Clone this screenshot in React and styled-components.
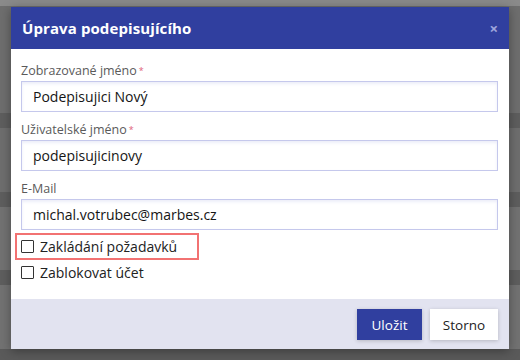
import React from 'react';
import styled, { createGlobalStyle } from 'styled-components';

const GlobalStyle = createGlobalStyle`
  html, body {
    margin: 0;
    padding: 0;
  }
  body {
    width: 520px;
    height: 360px;
    overflow: hidden;
    font-family: 'Open Sans', 'Noto Sans', sans-serif;
    background: linear-gradient(
      to bottom,
      #8a8a8a 0px,
      #8a8a8a 6px,
      #6e6e6e 6px,
      #6e6e6e 113px,
      #5e5e5e 113px,
      #5e5e5e 128px,
      #6e6e6e 128px,
      #6e6e6e 192px,
      #5e5e5e 192px,
      #5e5e5e 207px,
      #727272 207px,
      #727272 270px,
      #5e5e5e 270px,
      #5e5e5e 285px,
      #727272 285px,
      #727272 349px,
      #5a5a5a 349px
    );
  }
`;

const Page = styled.div`
  padding: 7px 0 0 11px;
`;

const Modal = styled.div`
  width: 498px;
  height: 342px;
  display: flex;
  flex-direction: column;
  background: #fff;
  box-shadow: 0 2px 10px rgba(0, 0, 0, 0.35);
`;

const Header = styled.div`
  height: 42px;
  flex-shrink: 0;
  display: flex;
  align-items: center;
  justify-content: space-between;
  padding: 0 11px 0 11px;
  background: #303f9f;
  color: #fff;
`;

const Title = styled.h2`
  margin: 0;
  font-size: 15px;
  font-weight: 700;
  letter-spacing: 0.1px;
`;

const Close = styled.span`
  font-size: 15px;
  font-weight: 700;
  color: #9fa6dc;
  line-height: 1;
`;

const Body = styled.div`
  flex: 1;
  padding: 15px 11px 0 10px;
`;

const Field = styled.div`
  margin-bottom: 11px;
`;

const Label = styled.div`
  height: 14px;
  line-height: 14px;
  margin-bottom: 3px;
  font-size: 12.5px;
  color: #5a5a5a;
`;

const Req = styled.span`
  color: #e0607a;
  font-size: 9px;
  vertical-align: top;
  margin-left: 2px;
`;

const Input = styled.div`
  box-sizing: border-box;
  height: 31px;
  display: flex;
  align-items: center;
  padding: 0 11px;
  border: 1px solid #c5c8ec;
  box-shadow: inset 0 2px 3px rgba(200, 203, 235, 0.35);
  font-size: 14px;
  color: #151515;
`;

const CheckList = styled.div`
  display: flex;
  flex-direction: column;
  align-items: flex-start;
  margin: -8px 0 0 -6px;
`;

const CheckRow = styled.label`
  display: inline-flex;
  align-items: center;
  gap: 6px;
  box-sizing: border-box;
  height: 26.5px;
  padding: 0 20px 0 4px;
  border: 2px solid ${({ highlighted }) => (highlighted ? '#f27272' : 'transparent')};
  font-size: 14px;
  color: #222;
`;

const Box = styled.span`
  box-sizing: border-box;
  width: 13px;
  height: 13px;
  border: 1.5px solid #333;
  border-radius: 1px;
`;

const Footer = styled.div`
  height: 50px;
  flex-shrink: 0;
  display: flex;
  justify-content: flex-end;
  align-items: flex-start;
  gap: 8px;
  padding: 10px 11px 0 0;
  box-sizing: border-box;
  background: #e2e3f0;
`;

const Button = styled.button`
  height: 31px;
  padding: 0;
  width: ${({ wide }) => wide}px;
  border: none;
  font-family: inherit;
  font-size: 13.5px;
  background: ${({ primary }) => (primary ? '#303f9f' : '#fff')};
  color: ${({ primary }) => (primary ? '#fff' : '#222')};
  box-shadow: 0 1px 4px rgba(0, 0, 0, 0.2);
`;

const fields = [
  { label: 'Zobrazované jméno', value: 'Podepisujici Nový', required: true },
  { label: 'Uživatelské jméno', value: 'podepisujicinovy', required: true },
  { label: 'E-Mail', value: 'michal.votrubec@marbes.cz' },
];

export default function App() {
  return (
    <>
      <GlobalStyle />
      <Page>
        <Modal>
          <Header>
            <Title>Úprava podepisujícího</Title>
            <Close>×</Close>
          </Header>
          <Body>
            {fields.map((f) => (
              <Field key={f.label}>
                <Label>
                  {f.label}
                  {f.required && <Req>*</Req>}
                </Label>
                <Input>{f.value}</Input>
              </Field>
            ))}
            <CheckList>
              <CheckRow highlighted>
                <Box />
                Zakládání požadavků
              </CheckRow>
              <CheckRow>
                <Box />
                Zablokovat účet
              </CheckRow>
            </CheckList>
          </Body>
          <Footer>
            <Button primary wide={65}>Uložit</Button>
            <Button wide={68}>Storno</Button>
          </Footer>
        </Modal>
      </Page>
    </>
  );
}
